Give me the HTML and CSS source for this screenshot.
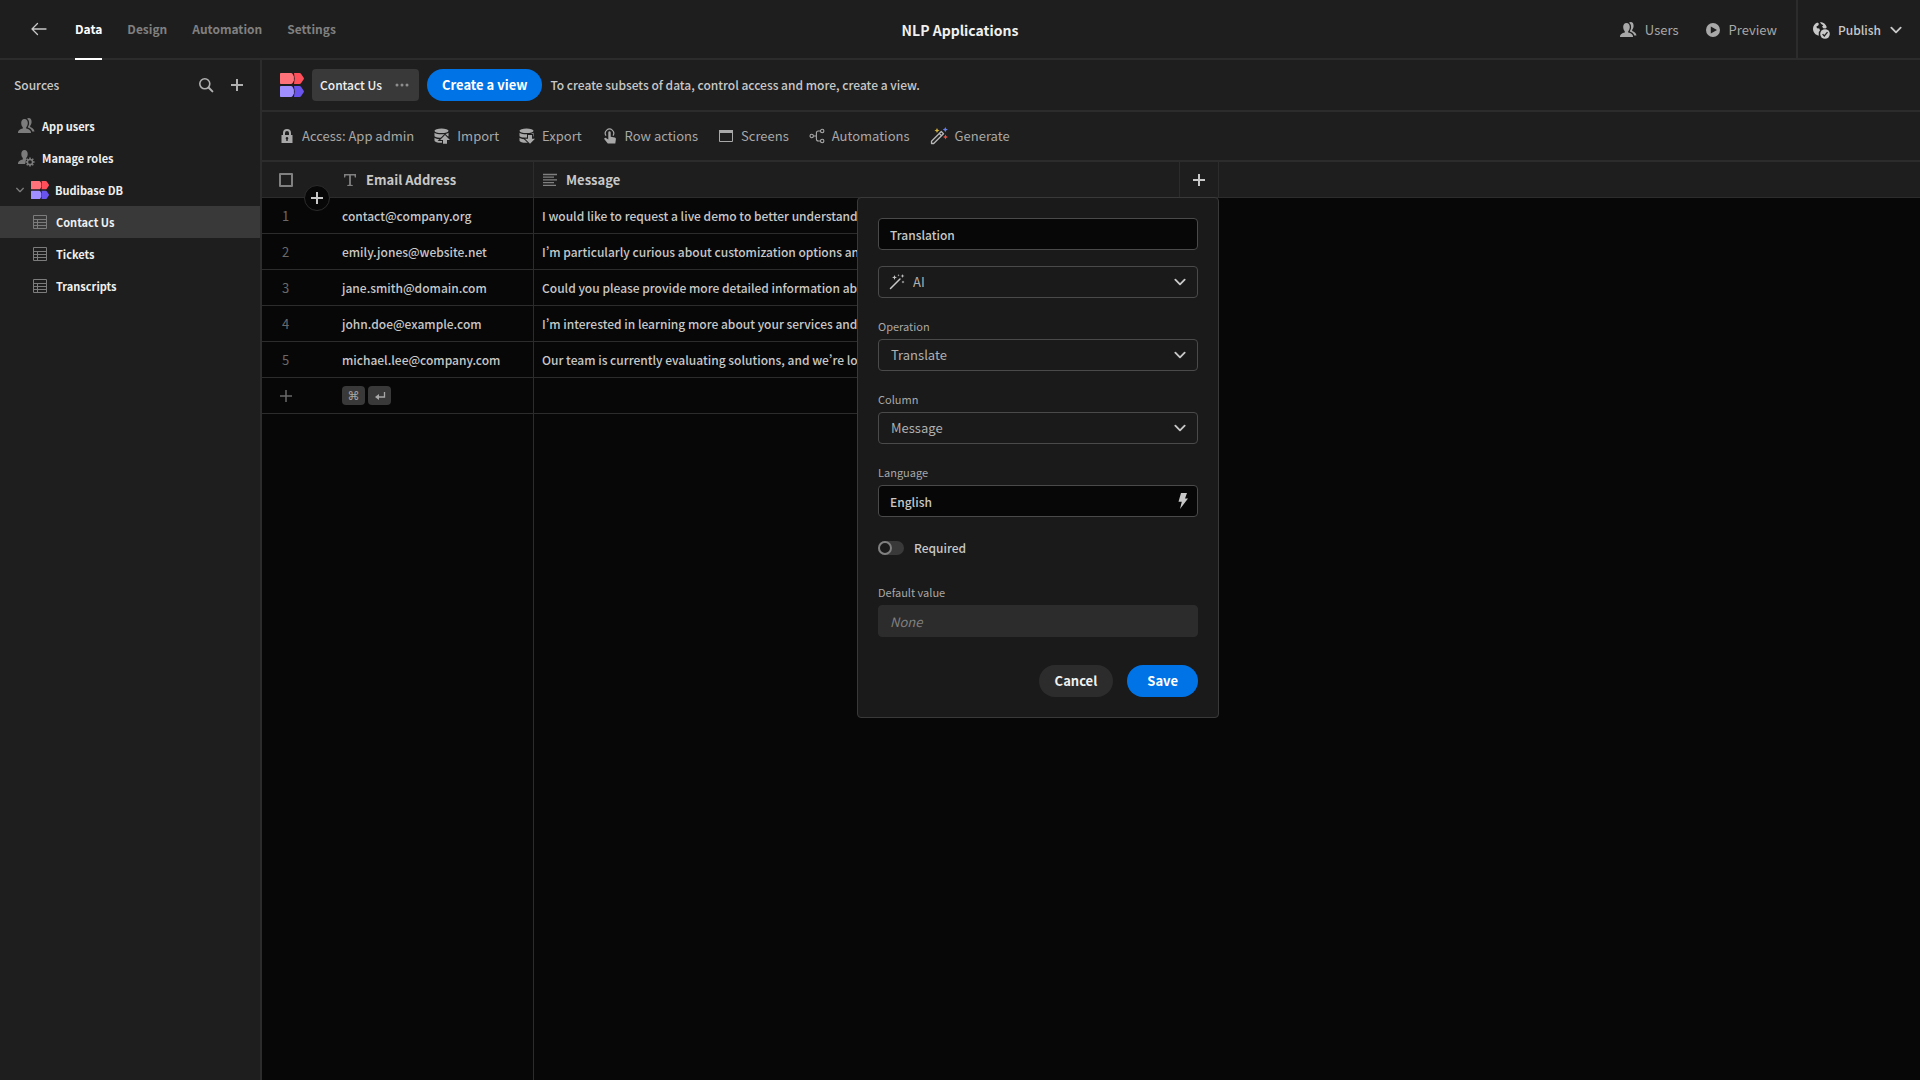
FILE: index.html
```html
<!DOCTYPE html>
<html lang="en">
<head>
  <meta charset="UTF-8">
  <meta name="viewport" content="width=device-width, initial-scale=1.0">
  <title>NLP Applications - Budibase</title>
  <link rel="stylesheet" href="styles.css">
</head>
<body>

  <!-- Shared icons -->
  <svg class="sprite" aria-hidden="true">
    <symbol id="logo" viewBox="0 0 24 24">
      <path fill="#ff7279" d="M0 .8Q0 0 .8 0H11Q12 0 12.500 .8L13.900 3.500V7.500L12.500 10.200Q12 11 11 11H.8Q0 11 0 10.200Z"/>
      <path fill="#ff4f5b" d="M14 0H19.500Q20.500 0 21 .8L23.700 4.700Q24.200 5.500 23.700 6.300L21 10.200Q20.500 11 19.500 11H14L14.700 5.500Z"/>
      <path fill="#9f8fff" d="M0 13.800Q0 13 .8 13H11Q12 13 12.500 13.800L13.900 16.500V20.500L12.500 23.200Q12 24 11 24H.8Q0 24 0 23.200Z"/>
      <path fill="#6a54ee" d="M14 13H19.500Q20.500 13 21 13.800L23.700 17.700Q24.200 18.500 23.700 19.300L21 23.200Q20.500 24 19.500 24H14L14.700 18.500Z"/>
    </symbol>
    <symbol id="users" viewBox="0 0 18 18">
      <path fill="currentColor" d="M7.500 2C5.200 2 4.200 3.700 4.200 6c0 1.800.7 3.300 1.600 4.200v1.300C3 12.200 1 13.300 1 15.500V16h13v-.5c0-2.200-2-3.300-4.800-4v-1.300c.9-.9 1.600-2.400 1.600-4.200 0-2.300-1-4-3.300-4z"/>
      <path fill="currentColor" d="M10 1.800c.5-.5 1-.7 1.700-.7 2 0 2.900 1.500 2.900 3.600 0 1.700-.6 3.100-1.400 4v1.300c2.300.9 4 2.200 4.300 4.500h-2.300c-.3-2-2-3.200-4.300-4v-.7c.8-.9 1.200-2.300 1.200-3.800 0-1.900-.6-3.400-2.100-4.200z"/>
    </symbol>
    <symbol id="table" viewBox="0 0 16 16">
      <path fill="none" stroke="currentColor" d="M1.500 1.500h13v13h-13zM1.500 5.500h13M1.500 8.500h13M1.500 11.500h13M5.500 5.500v9"/>
    </symbol>
    <symbol id="plus" viewBox="0 0 14 14">
      <path fill="none" stroke="currentColor" stroke-width="2" d="M7 1v12M1 7h12"/>
    </symbol>
    <symbol id="chevron" viewBox="0 0 12 12">
      <path fill="none" stroke="currentColor" stroke-width="1.600" stroke-linecap="round" stroke-linejoin="round" d="M2 4l4 4 4-4"/>
    </symbol>
    <symbol id="database" viewBox="0 0 16 16">
      <ellipse cx="7.500" cy="2.800" rx="7" ry="2.300" fill="currentColor"/>
      <path fill="currentColor" d="M.5 4.800C2 5.900 4.500 6.300 7.500 6.300s5.500-.4 7-1.500v3.400c-1.500 1-4 1.500-7 1.500s-5.500-.5-7-1.500zM.5 9.700c1.500 1 4 1.500 7 1.500s5.500-.5 7-1.500v2.700c0 1.400-3 2.400-7 2.400s-7-1-7-2.400z"/>
    </symbol>
  </svg>

  <!-- Top bar -->
  <header class="topbar">
    <nav class="topnav">
      <a class="back" href="#" aria-label="Back">
        <svg width="16" height="14" viewBox="0 0 16 14"><path fill="none" stroke="currentColor" stroke-width="1.300" stroke-linecap="round" stroke-linejoin="round" d="M15 7H1M6.500 1.500L1 7l5.500 5.500"/></svg>
      </a>
      <a class="tab active" href="#">Data</a>
      <a class="tab" href="#">Design</a>
      <a class="tab" href="#">Automation</a>
      <a class="tab" href="#">Settings</a>
    </nav>
    <h1>NLP Applications</h1>
    <div class="topactions">
      <button class="link-btn"><svg width="18" height="18"><use href="#users"/></svg>Users</button>
      <button class="link-btn">
        <svg width="16" height="16" viewBox="0 0 16 16"><path fill="currentColor" fill-rule="evenodd" d="M8 1a7 7 0 1 0 0 14A7 7 0 0 0 8 1zM5.800 4.400v7.200L12 8z"/></svg>
        Preview
      </button>
      <button class="publish">
        <svg width="18" height="18" viewBox="0 0 18 18">
          <path fill="currentColor" d="M5.300 1.500 7 2.800 6.200 4.600l-1.800.8.6 1.800 2.300.4.700 2-1.200 1.400-.1 3.800C3.500 14 1 11.400 1 7.800 1 4.800 2.800 2.500 5.300 1.500zM8 .9c3.400.1 6 2.200 6.800 5.300l-1.300 1.400-2.300-.4-1.100-1.800 1.200-1.200L9.200 3z"/>
          <circle cx="13" cy="13" r="4.800" fill="currentColor"/>
          <path fill="none" stroke="#1e1e1e" stroke-width="1.300" d="M10.600 13.100l1.700 1.800 3.200-3.800"/>
        </svg>
        Publish
        <svg width="14" height="14"><use href="#chevron"/></svg>
      </button>
    </div>
  </header>

  <div class="layout">

    <!-- Sources -->
    <aside class="sidebar">
      <div class="sidebar-head">
        <h2>Sources</h2>
        <button aria-label="Search">
          <svg width="16" height="16" viewBox="0 0 16 16"><g fill="none" stroke="currentColor" stroke-width="1.600"><circle cx="6.800" cy="6.800" r="5"/><path stroke-width="2" stroke-linecap="round" d="M10.800 10.800l3.600 3.600"/></g></svg>
        </button>
        <button aria-label="Add source"><svg width="14" height="14"><use href="#plus"/></svg></button>
      </div>
      <ul class="sources">
        <li><a href="#"><svg width="18" height="18"><use href="#users"/></svg>App users</a></li>
        <li><a href="#">
          <svg width="18" height="18" viewBox="0 0 18 18">
            <path fill="currentColor" d="M7.500 1C5.300 1 4.300 2.700 4.300 5c0 1.800.7 3.200 1.500 4.100v1.300C3 11 1 12.200 1 14.500v.5h7.300c-.4-1.700.2-3.600 1.500-4.700l-.6-.2V9.100c.8-.9 1.500-2.300 1.500-4.100 0-2.300-1-4-3.200-4z"/>
            <circle cx="13" cy="13" r="2.600" fill="none" stroke="currentColor" stroke-width="1.500"/>
            <path stroke="currentColor" stroke-width="1.600" d="M13 8.400v1.800M13 15.800v1.800M8.400 13h1.800M15.800 13h1.800M9.700 9.700l1.400 1.400M14.900 14.900l1.400 1.400M9.700 16.300l1.400-1.400M14.900 11.100l1.400-1.400"/>
          </svg>
          Manage roles</a></li>
        <li><a class="db" href="#"><svg width="10" height="10"><use href="#chevron"/></svg><svg width="18" height="18"><use href="#logo"/></svg>Budibase DB</a></li>
        <li><a class="child selected" href="#"><svg width="16" height="16"><use href="#table"/></svg>Contact Us</a></li>
        <li><a class="child" href="#"><svg width="16" height="16"><use href="#table"/></svg>Tickets</a></li>
        <li><a class="child" href="#"><svg width="16" height="16"><use href="#table"/></svg>Transcripts</a></li>
      </ul>
    </aside>

    <main class="content">

      <!-- Views -->
      <div class="viewbar">
        <svg width="24" height="24"><use href="#logo"/></svg>
        <button class="view-tab">Contact Us
          <svg width="14" height="4" viewBox="0 0 14 4"><g fill="#8e8e8e"><circle cx="2" cy="2" r="1.500"/><circle cx="7" cy="2" r="1.500"/><circle cx="12" cy="2" r="1.500"/></g></svg>
        </button>
        <button class="pill primary">Create a view</button>
        <p>To create subsets of data, control access and more, create a view.</p>
      </div>

      <!-- Table tools -->
      <div class="toolbar">
        <button>
          <svg width="16" height="16" viewBox="0 0 16 16"><path fill="currentColor" fill-rule="evenodd" d="M2.500 7H4V5a4 4 0 0 1 8 0v2h1.500v8h-11zM6 7h4V5a2 2 0 0 0-4 0zM8 9a1.300 1.300 0 0 0-.7 2.400V13h1.400v-1.600A1.300 1.300 0 0 0 8 9z"/></svg>
          Access: App admin
        </button>
        <button>
          <svg width="16" height="16" viewBox="0 0 16 16"><use href="#database"/><path class="arrow" d="M11 7l5 5h-3v3.800H9V12H6z"/></svg>
          Import
        </button>
        <button>
          <svg width="16" height="16" viewBox="0 0 16 16"><use href="#database"/><path class="arrow" d="M11 15.800l5-5h-3V7H9v3.800H6z"/></svg>
          Export
        </button>
        <button>
          <svg width="16" height="16" viewBox="0 0 16 16">
            <path fill="none" stroke="currentColor" stroke-width="1.200" d="M4 7.600A4.200 4.200 0 1 1 11 7.600"/>
            <path fill="currentColor" d="M6.300 4.500a1.200 1.200 0 0 1 2.400 0v4.300l4 .8c.8.200 1.300.8 1.200 1.600L13.300 15.500H5.800L2.400 11.300c-.6-.9.600-1.900 1.500-1.200l2.400 1.500z"/>
          </svg>
          Row actions
        </button>
        <button>
          <svg width="16" height="16" viewBox="0 0 16 16"><path fill="none" stroke="currentColor" d="M1.500 2.500h13v11h-13z"/><path fill="currentColor" d="M1 2h14v3H1z"/></svg>
          Screens
        </button>
        <button>
          <svg width="16" height="16" viewBox="0 0 16 16"><g fill="none" stroke="currentColor" stroke-width="1.100"><circle cx="2.700" cy="8" r="1.700"/><circle cx="13.200" cy="3" r="1.700"/><circle cx="13.200" cy="13" r="1.700"/><path d="M4.400 8h3M11.500 3H9.400Q7.400 3 7.400 5v6q0 2 2 2h2.100"/></g></svg>
          Automations
        </button>
        <button>
          <svg width="18" height="18" viewBox="0 0 18 18">
            <path fill="none" stroke="#b8b8b8" stroke-width="1.300" stroke-linejoin="round" d="M1.500 14.300L11.300 4.500l2.200 2.200L3.700 16.500H1.500zM9.300 6.500l2.200 2.200"/>
            <path fill="#d6b43c" d="M7 1l.8 1.700 1.700.8-1.700.8L7 6l-.8-1.700-1.700-.8 1.700-.8z"/>
            <path fill="#6680e8" d="M15.300 0l.8 1.800 1.800.8-1.800.8-.8 1.800-.8-1.800-1.800-.8 1.800-.8z"/>
            <path fill="#e85548" d="M15.500 7.500l.8 1.700 1.700.8-1.700.8-.8 1.700-.8-1.700L13 10l1.700-.8z"/>
          </svg>
          Generate
        </button>
      </div>

      <!-- Data grid -->
      <div class="grid">
        <table>
          <colgroup>
            <col class="col-gutter">
            <col class="col-email">
            <col class="col-message">
            <col class="col-add">
            <col>
          </colgroup>
          <thead>
            <tr>
              <th class="gutter">
                <input type="checkbox" aria-label="Select all rows">
                <button class="insert" aria-label="Insert row"><svg width="14" height="14"><use href="#plus"/></svg></button>
              </th>
              <th class="email">
                <div class="col-name">
                  <svg width="14" height="14" viewBox="0 0 14 14"><path fill="currentColor" d="M1 1h12v3.500h-1.200L11.400 2.400H7.900v9.300l1.800.3v1H4.300v-1l1.800-.3V2.400H2.600L2.200 4.500H1z"/></svg>
                  Email Address
                </div>
              </th>
              <th>
                <div class="col-name">
                  <svg width="14" height="14" viewBox="0 0 14 14"><path stroke="currentColor" stroke-width="1.300" d="M0 1.500h14M0 4.200h11M0 6.900h14M0 9.600h11M0 12.300h13"/></svg>
                  Message
                </div>
              </th>
              <th class="add">
                <button class="add-col" aria-label="Add column"><svg width="14" height="14"><use href="#plus"/></svg></button>

                <!-- New column popover -->
                <form class="popover">
                  <input class="field" type="text" value="Translation" aria-label="Column name">
                  <div class="picker with-icon">
                    <svg class="lead" width="16" height="16" viewBox="0 0 16 16">
                      <path stroke="currentColor" stroke-width="1.500" stroke-linecap="round" d="M1.500 14.500L11 5"/>
                      <path fill="currentColor" d="M5.500 1l.7 1.700 1.800.7-1.800.7-.7 1.800-.7-1.800L3 3.400l1.800-.7zM13.500 0l.5 1.500 1.500.5-1.500.5-.5 1.500-.5-1.500-1.500-.5 1.500-.5zM14 6.500l.4 1.100 1.100.4-1.100.4-.4 1.100-.4-1.100-1.100-.4 1.100-.4zM9.500 0l.3.900.9.300-.9.300-.3.900-.3-.9-.9-.3.900-.3z"/>
                    </svg>
                    <select aria-label="Column type"><option>AI</option></select>
                    <svg class="caret" width="14" height="14"><use href="#chevron"/></svg>
                  </div>
                  <label for="operation">Operation</label>
                  <div class="picker">
                    <select id="operation"><option>Translate</option></select>
                    <svg class="caret" width="14" height="14"><use href="#chevron"/></svg>
                  </div>
                  <label for="column">Column</label>
                  <div class="picker">
                    <select id="column"><option>Message</option></select>
                    <svg class="caret" width="14" height="14"><use href="#chevron"/></svg>
                  </div>
                  <label for="language">Language</label>
                  <div class="picker">
                    <input class="field" type="text" id="language" value="English">
                    <svg class="bolt" width="10" height="16" viewBox="0 0 10 16"><path fill="currentColor" d="M3 0h6L7 5.500h3L2 16 3.800 8.800H.5z"/></svg>
                  </div>
                  <div class="switch">
                    <input type="checkbox" id="required">
                    <label for="required">Required</label>
                  </div>
                  <label for="default">Default value</label>
                  <input class="field" type="text" id="default" placeholder="None" disabled>
                  <div class="buttons">
                    <button type="button" class="pill">Cancel</button>
                    <button type="button" class="pill primary">Save</button>
                  </div>
                </form>
              </th>
              <th></th>
            </tr>
          </thead>
          <tbody>
            <tr>
              <td class="gutter">1</td>
              <td class="email">contact@company.org</td>
              <td>I would like to request a live demo to better understand</td>
            </tr>
            <tr>
              <td class="gutter">2</td>
              <td class="email">emily.jones@website.net</td>
              <td>I’m particularly curious about customization options and</td>
            </tr>
            <tr>
              <td class="gutter">3</td>
              <td class="email">jane.smith@domain.com</td>
              <td>Could you please provide more detailed information about</td>
            </tr>
            <tr>
              <td class="gutter">4</td>
              <td class="email">john.doe@example.com</td>
              <td>I’m interested in learning more about your services and</td>
            </tr>
            <tr>
              <td class="gutter">5</td>
              <td class="email">michael.lee@company.com</td>
              <td>Our team is currently evaluating solutions, and we’re looking</td>
            </tr>
            <tr>
              <td class="gutter"><button class="add-row" aria-label="Add row"><svg width="14" height="14" viewBox="0 0 14 14"><path stroke="currentColor" stroke-width="1.500" d="M7 1v12M1 7h12"/></svg></button></td>
              <td class="email">
                <div class="keys">
                  <kbd>⌘</kbd>
                  <kbd><svg width="12" height="12" viewBox="0 0 12 12" aria-label="Enter"><path fill="none" stroke="currentColor" stroke-width="1.300" d="M10.500 2v5H3"/><path fill="currentColor" d="M1 7l4-3v6z"/></svg></kbd>
                </div>
              </td>
              <td></td>
            </tr>
            <tr class="rest">
              <td></td>
              <td class="email"></td>
              <td></td>
            </tr>
          </tbody>
        </table>
      </div>
    </main>
  </div>

</body>
</html>
```
FILE: styles.css
```css
/* Basic Reset */
*,
*::before {
  margin: 0;
  padding: 0;
  box-sizing: border-box;
}

body {
  height: 100vh;
  display: flex;
  flex-direction: column;
  background-color: #1e1e1e;
  color: #c8c8c8;
  font-family: "Noto Sans CJK SC", "Open Sans", sans-serif;
  font-size: 12px;
  font-weight: 500;
  font-feature-settings: "pwid"; /* narrow apostrophes */
  line-height: 20px;
}

button,
input,
select {
  font: inherit;
  color: inherit;
}

button {
  border: none;
  background: none;
  cursor: pointer;
}

a {
  color: inherit;
  text-decoration: none;
}

svg {
  display: block;
  flex-shrink: 0;
}

.sprite {
  position: absolute;
  width: 0;
  height: 0;
}

/* Top bar */
.topbar {
  height: 60px;
  display: grid;
  grid-template-columns: 1fr auto 1fr;
  border-bottom: 2px solid #2c2c2c;
}

.topnav {
  display: flex;
  gap: 25px;
  padding-left: 31px;
}

.topnav a {
  display: flex;
  align-items: center;
  height: 60px;
  border-bottom: 2px solid transparent;
}

.topnav .back {
  margin-right: 3px;
}

.topnav .tab {
  color: #808080;
  font-weight: 700;
}

.topnav .tab.active {
  color: #fff;
  border-bottom-color: #fff;
}

.topbar h1 {
  align-self: center;
  color: #f0f0f0;
  font-size: 14px;
  font-weight: 700;
}

.topactions {
  display: flex;
  justify-content: flex-end;
}

.link-btn,
.publish {
  display: flex;
  align-items: center;
  gap: 8px;
}

.link-btn {
  margin-right: 26px;
  color: #a8a8a8;
  font-size: 13px;
  font-weight: 400;
}

.link-btn + .publish {
  margin-left: -7px;
}

.publish {
  padding: 0 17px 0 14px;
  border-left: 2px solid #2c2c2c;
}

/* Layout */
.layout {
  flex: 1;
  min-height: 0;
  display: flex;
}

/* Sidebar */
.sidebar {
  width: 262px;
  flex-shrink: 0;
  border-right: 2px solid #2c2c2c;
}

.sidebar-head {
  height: 50px;
  display: flex;
  align-items: center;
  gap: 16px;
  padding: 0 16px 0 14px;
  color: #b0b0b0;
}

.sidebar-head h2 {
  flex: 1;
  color: #c8c8c8;
  font-size: 12px;
  font-weight: 500;
}

.sources {
  list-style: none;
}

.sources a {
  height: 32px;
  display: flex;
  align-items: center;
  gap: 7px;
  padding-left: 17px;
  color: #f0f0f0;
  font-size: 11px;
  font-weight: 700;
}

.sources svg {
  color: #7c7c7c;
}

.sources .db {
  gap: 6px;
  padding-left: 15px;
}

.sources .child {
  gap: 8px;
  padding-left: 32px;
}

.sources .selected {
  background-color: #393939;
}

/* Content */
.content {
  flex: 1;
  min-width: 0;
  display: flex;
  flex-direction: column;
}

.viewbar {
  height: 52px;
  display: flex;
  align-items: center;
  gap: 8px;
  padding-left: 18px;
  border-bottom: 2px solid #2c2c2c;
}

.view-tab {
  height: 32px;
  display: flex;
  align-items: center;
  gap: 13px;
  padding: 0 10px 0 8px;
  border-radius: 4px;
  background-color: #393939;
  color: #f0f0f0;
}

.pill {
  height: 32px;
  padding: 0 16px;
  border-radius: 16px;
  background-color: #2c2c2c;
  color: #f0f0f0;
  font-size: 13px;
  font-weight: 700;
}

.pill.primary {
  background-color: #0073e6;
  color: #fff;
}

.viewbar .pill {
  padding: 0 15px;
}

.toolbar {
  height: 50px;
  display: flex;
  align-items: center;
  gap: 20px;
  padding-left: 17px;
  border-bottom: 2px solid #2c2c2c;
}

.toolbar button {
  display: flex;
  align-items: center;
  gap: 7px;
  color: #a8a8a8;
  font-size: 13px;
  font-weight: 400;
}

.arrow {
  fill: currentColor;
  stroke: #1e1e1e;
  stroke-width: 2;
  paint-order: stroke;
}

/* Grid */
.grid {
  flex: 1;
  background-color: #070707;
}

table {
  width: 100%;
  height: 100%;
  table-layout: fixed;
  border-spacing: 0;
}

.col-gutter {
  width: 71px;
}

.col-email {
  width: 201px;
}

.col-message {
  width: 645px;
}

.col-add {
  width: 40px;
}

th {
  height: 36px;
  background-color: #1e1e1e;
  border-bottom: 1px solid #2c2c2c;
  text-align: left;
  vertical-align: middle;
}

td {
  height: 36px;
  padding: 0 8px;
  border-bottom: 1px solid #2c2c2c;
  white-space: nowrap;
  overflow: hidden;
}

.email {
  padding-left: 9px;
  border-right: 1px solid #2c2c2c;
}

td.gutter {
  padding-left: 17px;
  color: #6a6a6a;
  font-size: 13px;
  font-weight: 400;
}

td.gutter:not(:has(button)) {
  padding-left: 20px;
}

.rest td {
  height: auto;
  border-bottom: none;
}

th.gutter {
  position: relative;
  padding-left: 17px;
}

th.gutter input {
  display: block;
  appearance: none;
  width: 14px;
  height: 14px;
  border: 2px solid #808080;
  border-radius: 1px;
}

.insert {
  position: absolute;
  right: 3px;
  bottom: -14px;
  width: 26px;
  height: 26px;
  display: flex;
  align-items: center;
  justify-content: center;
  border: 1px solid #2c2c2c;
  border-radius: 50%;
  background-color: #070707;
}

.col-name {
  display: flex;
  align-items: center;
  gap: 9px;
  padding-left: 9px;
  font-size: 13px;
  font-weight: 700;
}

.email .col-name {
  padding-left: 1px;
}

.col-name svg {
  color: #808080;
}

.add {
  position: relative;
  border-left: 1px solid #2c2c2c;
  border-right: 1px solid #2c2c2c;
}

.add-col {
  width: 100%;
  display: flex;
  justify-content: center;
}

.add-row {
  display: block;
}

.keys {
  display: flex;
  gap: 3px;
}

kbd {
  width: 23px;
  height: 19px;
  display: flex;
  align-items: center;
  justify-content: center;
  border-radius: 4px;
  background-color: #393939;
  color: #a8a8a8;
  font-family: "DejaVu Sans", sans-serif;
  font-size: 12px;
}

/* New column popover */
.popover {
  position: absolute;
  top: 100%;
  right: -1px;
  z-index: 10;
  width: 362px;
  display: flex;
  flex-direction: column;
  padding: 20px;
  border: 1px solid #393939;
  border-radius: 4px;
  background-color: #1a1a1a;
  font-weight: 500;
}

.popover > label {
  margin-top: 18px;
  padding-bottom: 3px;
  color: #a8a8a8;
  font-size: 11px;
  font-weight: 400;
}

.field,
.picker select {
  width: 100%;
  height: 32px;
  padding: 0 11px;
  border: 1px solid #4a4a4a;
  border-radius: 4px;
  outline: none;
}

.field {
  background-color: #070707;
}

.field:disabled {
  border-color: #2c2c2c;
  background-color: #2c2c2c;
}

.field::placeholder {
  color: #808080;
  font-size: 13px;
  font-style: italic;
  font-weight: 400;
}

.picker {
  position: relative;
}

.picker.with-icon {
  margin-top: 16px;
}

.picker select {
  appearance: none;
  padding: 0 12px;
  background-color: #1a1a1a;
  color: #b0b0b0;
  font-size: 13px;
  font-weight: 400;
}

.picker.with-icon select {
  padding-left: 34px;
}

.picker svg {
  position: absolute;
  top: 8px;
  pointer-events: none;
}

.picker .lead {
  left: 11px;
}

.picker .caret {
  top: 9px;
  right: 11px;
}

.picker .bolt {
  right: 10px;
}

.switch {
  display: flex;
  align-items: center;
  gap: 10px;
  margin: 21px 0 6px;
}

.switch input {
  appearance: none;
  width: 26px;
  height: 14px;
  border: none;
  border-radius: 7px;
  background-color: #393939;
}

.switch input::before {
  content: "";
  display: block;
  width: 14px;
  height: 14px;
  border: 2px solid #808080;
  border-radius: 50%;
  background-color: #1a1a1a;
}

.buttons {
  display: flex;
  justify-content: flex-end;
  gap: 14px;
  margin-top: 28px;
}

.buttons .primary {
  padding: 0 20px;
}
```
